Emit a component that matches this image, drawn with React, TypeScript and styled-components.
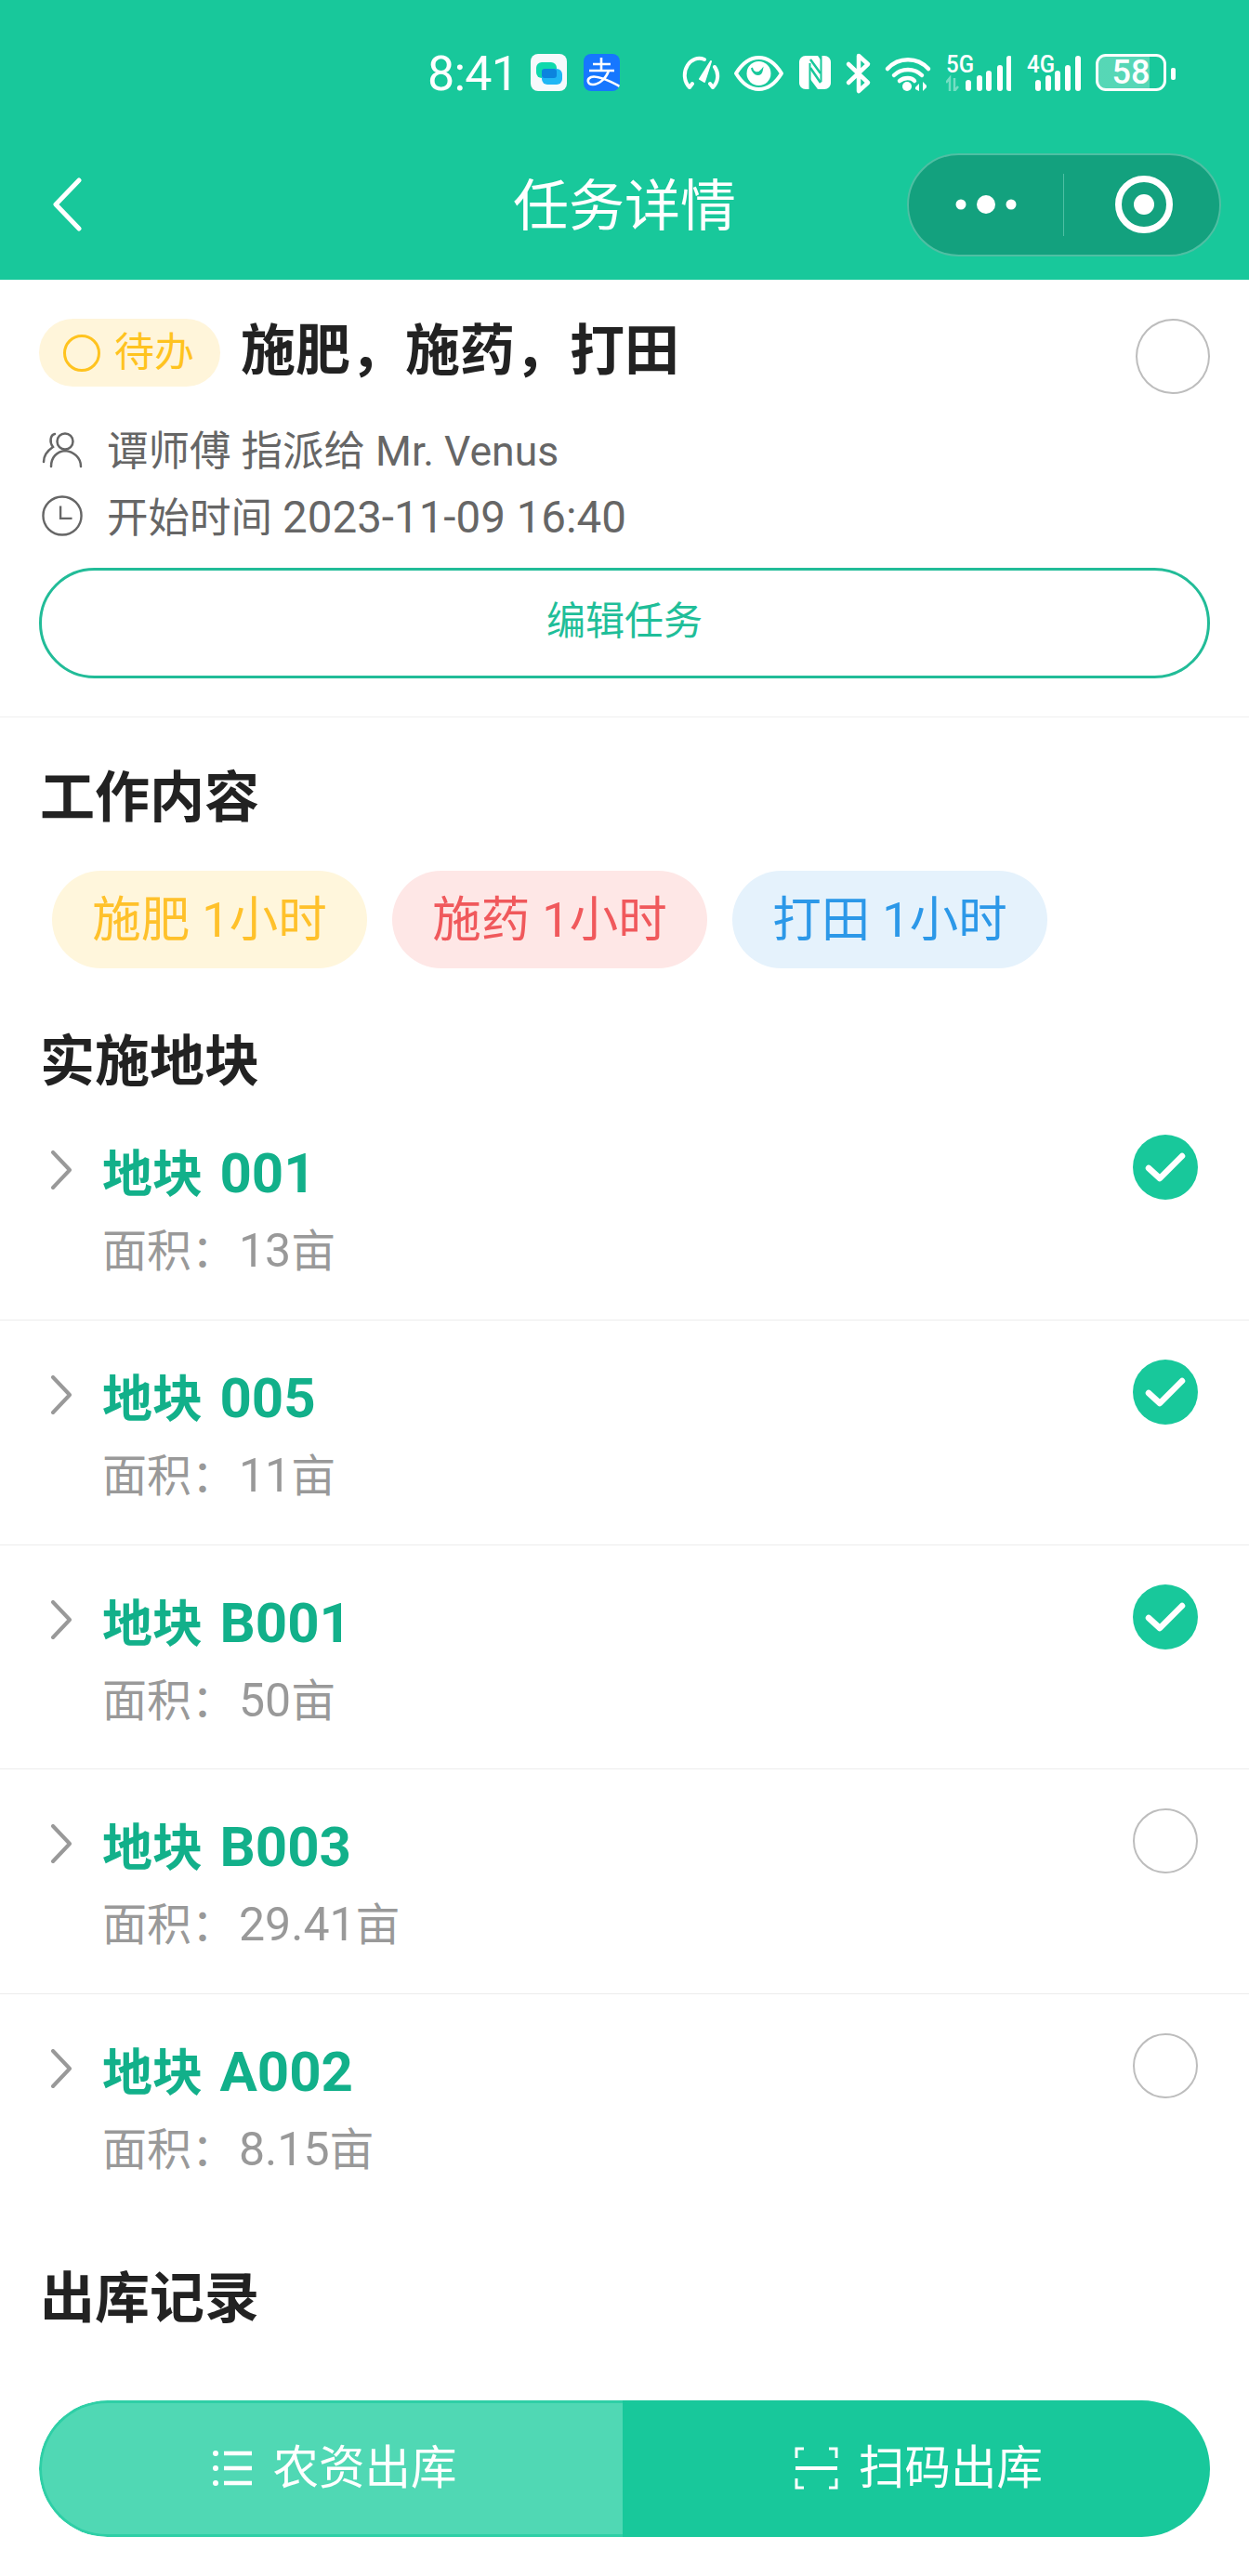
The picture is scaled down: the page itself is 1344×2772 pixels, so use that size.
import React from "react";
import styled, { createGlobalStyle } from "styled-components";

const Global = createGlobalStyle`
  html, body { margin: 0; padding: 0; background: #fff; }
  * { box-sizing: border-box; }
  body { font-family: Roboto, "Noto Sans CJK SC", sans-serif; }
`;

const Page = styled.div`
  width: 1344px;
  height: 2772px;
  overflow: hidden;
  background: #fff;
  display: flex;
  flex-direction: column;
`;

const Header = styled.header`
  height: 301px;
  background: #18c89b;
  color: #fff;
  display: flex;
  flex-direction: column;
`;

const StatusBar = styled.div`
  height: 150px;
  padding: 58px 0 0 460px;
  display: flex;
  align-items: flex-start;
`;

const Time = styled.span`
  width: 96px;
  height: 42px;
  font-size: 52px;
  line-height: 44px;
  letter-spacing: -0.8px;
  margin-right: 15px;
  white-space: nowrap;
`;

const AppTile = styled.div<{ $bg: string }>`
  width: 39px;
  height: 40px;
  border-radius: 8px;
  background: ${(p) => p.$bg};
  margin-right: 18px;
  flex: none;
  overflow: hidden;
`;

const StatusIcon = styled.svg<{ $gap: number }>`
  display: block;
  flex: none;
  margin-left: ${(p) => p.$gap}px;
  overflow: visible;
`;

const SignalIcon = styled.div<{ $w: number; $gap: number }>`
  position: relative;
  width: ${(p) => p.$w}px;
  height: 40px;
  margin-left: ${(p) => p.$gap}px;
  flex: none;
`;

const SignalLabel = styled.span`
  position: absolute;
  left: 0;
  top: 0;
  font-size: 24px;
  font-weight: 500;
  line-height: 22px;
  transform: scaleY(1.1);
  white-space: nowrap;
`;

const Battery = styled.div`
  width: 76px;
  height: 40px;
  margin-left: 16px;
  border: 3px solid #fff;
  border-radius: 11px;
  background: linear-gradient(90deg, rgba(255, 255, 255, 0.27) 78%, transparent 78%);
  font-size: 36px;
  font-weight: 500;
  line-height: 35px;
  text-align: center;
  flex: none;
`;

const BatteryNub = styled.div`
  width: 5px;
  height: 13px;
  margin: 15px 0 0 5px;
  background: #fff;
  border-radius: 2px;
  flex: none;
`;

const Nav = styled.nav`
  height: 140px;
  padding: 0 30px;
  display: grid;
  grid-template-columns: 1fr auto 1fr;
  align-items: center;
`;

const BackIcon = styled.svg`
  display: block;
  margin-left: 26px;
`;

const NavTitle = styled.h1`
  margin: 6px 0 0;
  font-size: 60px;
  font-weight: 400;
  line-height: 80px;
`;

const Capsule = styled.div`
  justify-self: end;
  width: 338px;
  height: 111px;
  border-radius: 56px;
  background: #13a17e;
  border: 2px solid #4fbfa3;
  display: flex;
  align-items: center;
`;

const CapsuleSide = styled.div<{ $w: number }>`
  width: ${(p) => p.$w}px;
  display: flex;
  align-items: center;
  justify-content: center;
  flex: none;
`;

const CapsuleRule = styled.div`
  width: 1px;
  height: 67px;
  background: #4fbfa3;
  flex: none;
`;

const TaskCard = styled.section`
  padding: 42px 42px 42px 42px;
  border-bottom: 1px solid #efefef;
  height: 471px;
`;

const TitleRow = styled.div`
  height: 81px;
  display: flex;
  align-items: flex-start;
`;

const StatusPill = styled.div`
  width: 195px;
  height: 73px;
  border-radius: 37px;
  background: #fff5da;
  color: #ffc31f;
  display: flex;
  align-items: center;
  padding-left: 26px;
  font-size: 43px;
  line-height: 73px;
  gap: 15px;
  flex: none;
`;

const PillDot = styled.span`
  width: 40px;
  height: 40px;
  border-radius: 50%;
  border: 3px solid #ffc31f;
  flex: none;
`;

const TaskTitle = styled.h2`
  margin: -2px 0 0 22px;
  font-size: 59px;
  font-weight: 700;
  line-height: 73px;
  color: #222;
  letter-spacing: 0;
`;

const RoundCheck = styled.div`
  width: 80px;
  height: 81px;
  border-radius: 50%;
  border: 2px solid #bdbdbd;
  margin-left: auto;
  flex: none;
`;

const MetaRows = styled.div`
  margin-top: 27px;
`;

const MetaRow = styled.div`
  height: 71px;
  display: flex;
  align-items: center;
  color: #666;
  font-size: 44.5px;
  line-height: 75px;
  white-space: pre;
`;

const MetaIcon = styled.svg<{ $width: number }>`
  display: block;
  margin: -5px 0 0 3px;
  width: ${(p) => p.$width}px;
  flex: none;
`;

const MetaText = styled.span`
  margin-left: 26px;
`;

const MetaNumber = styled.span`
  font-size: 47.5px;
  line-height: 75px;
`;

const EditButton = styled.button`
  display: block;
  width: 100%;
  height: 119px;
  margin-top: 18px;
  border: 3px solid #22bc98;
  border-radius: 60px;
  background: #fff;
  color: #1fbe99;
  font-family: inherit;
  font-size: 42px;
  line-height: 1;
  padding: 0 0 3px;
`;

const SectionHead = styled.h3<{ $top: number; $nudge?: number }>`
  margin: ${(p) => p.$top}px 0 0 43px;
  height: 76px;
  font-size: 59px;
  font-weight: 700;
  line-height: ${(p) => 76 + (p.$nudge ?? 0)}px;
  color: #222;
`;

const Tags = styled.div`
  margin-top: 40px;
  padding-left: 56px;
  display: flex;
  gap: 27px;
`;

const Tag = styled.div<{ $bg: string; $fg: string }>`
  width: 339px;
  height: 105px;
  border-radius: 53px;
  background: ${(p) => p.$bg};
  color: ${(p) => p.$fg};
  font-size: 52.5px;
  line-height: 107px;
  text-align: center;
`;

const Rows = styled.div``;

const PlotRow = styled.div<{ $last?: boolean }>`
  height: 241.75px;
  padding: 42px 55px 0 55px;
  display: flex;
  align-items: flex-start;
  border-bottom: ${(p) => (p.$last ? "none" : "1px solid #ececec")};
`;

const Chevron = styled.svg`
  display: block;
  margin-top: 17px;
  flex: none;
`;

const PlotInfo = styled.div`
  margin: 6px 0 0 33px;
  flex: 1;
`;

const PlotName = styled.div`
  font-size: 54px;
  font-weight: 700;
  line-height: 72px;
  color: #12b08a;
`;

const PlotCode = styled.span`
  font-size: 60px;
  margin-left: 5px;
`;

const PlotArea = styled.div`
  margin-top: 9px;
  font-size: 48px;
  line-height: 72px;
  color: #999;
`;

const PlotAreaValue = styled.span`
  font-size: 50px;
  margin-left: 3px;
`;

const Tick = styled.div<{ $done: boolean }>`
  width: 70px;
  height: 70px;
  border-radius: 50%;
  flex: none;
  background: ${(p) => (p.$done ? "#18c89b" : "#fff")};
  border: ${(p) => (p.$done ? "none" : "2px solid #bdbdbd")};
  display: flex;
  align-items: center;
  justify-content: center;
`;

const BottomBar = styled.div`
  margin: 71px 42px 0 42px;
  height: 147px;
  border-radius: 74px;
  overflow: hidden;
  display: flex;
`;

const BarButton = styled.div<{ $left?: boolean }>`
  height: 147px;
  display: flex;
  align-items: center;
  justify-content: center;
  gap: 22px;
  color: #fff;
  font-size: 49.5px;
  line-height: 60px;
  padding-left: 5px;
  ${(p) =>
    p.$left
      ? `width: 628px; background: #50d8b4; border: 3px solid #2ecfa6; border-right: none; border-radius: 74px 0 0 74px;`
      : `flex: 1; background: #18c89b;`}
`;

const plots = [
  { code: "001", area: "13", done: true },
  { code: "005", area: "11", done: true },
  { code: "B001", area: "50", done: true },
  { code: "B003", area: "29.41", done: false },
  { code: "A002", area: "8.15", done: false },
];

const W = "#fff";
const barHeights = [12, 17, 22, 28, 38];

const SignalBars = ({ w, bars, dim }: { w: number; bars: number[]; dim?: boolean }) => (
  <svg width={w} height="40" viewBox={`0 0 ${w} 40`} style={{ display: "block" }}>
    {dim && <path d="M4 40V26L0 31M9 26V40L13 35" stroke={W} strokeOpacity=".4" strokeWidth="2.5" fill="none" />}
    {bars.map((b, i) => (
      <rect key={i} x={b} y={40 - barHeights[i]} width="6" height={barHeights[i]} rx="3" fill={W} />
    ))}
  </svg>
);

export default function App() {
  return (
    <Page>
      <Global />
      <Header>
        <StatusBar>
          <Time>8:41</Time>
          <AppTile $bg="#f6f9fc">
            <svg width="39" height="40" viewBox="0 0 39 40">
              <rect x="6" y="9" width="22" height="17" rx="6" fill="#0fd9ac" />
              <rect x="12" y="16" width="22" height="17" rx="6" fill="#1fb6f5" />
              <rect x="12" y="16" width="16" height="10" rx="3" fill="#0b84de" />
            </svg>
          </AppTile>
          <AppTile $bg="#1677ff">
            <svg width="39" height="40" viewBox="0 0 39 40">
              <path d="M10 11H29M6 18H33M19 4V18M27 18C24 27 16 33 10 33C4 33 3 27 8 25C14 23 26 28 39 35" fill="none" stroke={W} strokeWidth="2.6" />
            </svg>
          </AppTile>
          <StatusIcon $gap={49} width="41" height="40" viewBox="0 0 41 40">
            <path d="M8 36C2 30 1 20 6 12C10 6 17 3 24 6M35 14C40 21 39 30 33 36M33 36L30 32M8 36L11 32" fill="none" stroke={W} strokeWidth="4" strokeLinecap="round" />
            <path d="M19 27L31 8L24 30Z" fill={W} stroke={W} strokeWidth="2" strokeLinejoin="round" />
          </StatusIcon>
          <StatusIcon $gap={15} width="53" height="40" viewBox="0 0 53 40">
            <path d="M2 21C10 8 18 4 26.5 4S43 8 51 21C43 34 35 38 26.5 38S10 34 2 21Z" fill="none" stroke={W} strokeWidth="4" strokeLinejoin="round" />
            <circle cx="26.5" cy="21" r="13" fill={W} />
            <path d="M19 15C20 21 26 22 30 17C29 23 22 25 19 15Z" fill="#18c89b" stroke="#18c89b" strokeWidth="2" />
          </StatusIcon>
          <StatusIcon $gap={16} width="36" height="40" viewBox="0 0 36 40">
            <path d="M8 2H12V38H8C4 38 1 35 1 31V9C1 5 4 2 8 2Z" fill={W} />
            <path d="M28 2H24V38H28C32 38 35 35 35 31V9C35 5 32 2 28 2Z" fill={W} />
            <path d="M12 2H21L28 12V38H21L12 26Z" fill={W} />
            <path d="M13 6L24 21M13 15L24 31" stroke="#18c89b" strokeWidth="2.5" />
            <path d="M12.5 10V38M24.5 2V30" stroke="#18c89b" strokeWidth="2" />
          </StatusIcon>
          <StatusIcon $gap={15} width="27" height="42" viewBox="0 0 27 42">
            <path d="M3 11L24 31L14 40V2L24 11L3 31" fill="none" stroke={W} strokeWidth="4.5" strokeLinejoin="round" strokeLinecap="round" />
          </StatusIcon>
          <StatusIcon $gap={15} width="51" height="40" viewBox="0 0 51 40">
            <path d="M3 16C15 3 35 3 47 16M10 23C18 15 32 15 40 23M16 29C21 25 29 25 32 29" fill="none" stroke={W} strokeWidth="4.5" strokeLinecap="round" />
            <circle cx="24" cy="35" r="5" fill={W} />
            <path d="M37 40V32L33 36V38ZM41 30V40L45 36V34Z" fill={W} />
          </StatusIcon>
          <SignalIcon $w={70} $gap={15}>
            <SignalLabel>5G</SignalLabel>
            <SignalBars w={70} bars={[21, 33, 43, 55, 65]} dim />
          </SignalIcon>
          <SignalIcon $w={58} $gap={17}>
            <SignalLabel>4G</SignalLabel>
            <SignalBars w={58} bars={[9, 20, 30, 41, 52]} />
          </SignalIcon>
          <Battery>58</Battery>
          <BatteryNub />
        </StatusBar>
        <Nav>
          <BackIcon width="32" height="58" viewBox="0 0 32 58">
            <path d="M29 3L4 29L29 55" fill="none" stroke={W} strokeWidth="5" strokeLinecap="round" strokeLinejoin="round" />
          </BackIcon>
          <NavTitle>任务详情</NavTitle>
          <Capsule>
            <CapsuleSide $w={166}>
              <svg width="66" height="22" viewBox="0 0 66 22">
                <circle cx="6" cy="11" r="5.5" fill={W} />
                <circle cx="33" cy="11" r="10" fill={W} />
                <circle cx="60" cy="11" r="5.5" fill={W} />
              </svg>
            </CapsuleSide>
            <CapsuleRule />
            <CapsuleSide $w={172}>
              <svg width="62" height="62" viewBox="0 0 62 62">
                <circle cx="31" cy="31" r="27.5" fill="none" stroke={W} strokeWidth="7" />
                <circle cx="31" cy="31" r="11" fill={W} />
              </svg>
            </CapsuleSide>
          </Capsule>
        </Nav>
      </Header>

      <TaskCard>
        <TitleRow>
          <StatusPill>
            <PillDot />
            待办
          </StatusPill>
          <TaskTitle>施肥，施药，打田</TaskTitle>
          <RoundCheck />
        </TitleRow>
        <MetaRows>
          <MetaRow>
            <MetaIcon $width={44} height="40" viewBox="0 0 44 40">
              <circle cx="25" cy="11" r="8.5" fill="none" stroke="#666" strokeWidth="2.5" />
              <path d="M10 38C10 28 16 22 25 21C34 22 42 28 42 38" fill="none" stroke="#666" strokeWidth="2.5" strokeLinecap="round" />
              <path d="M14 3C9 4 8 12 12 17C6 21 2 26 2 33" fill="none" stroke="#666" strokeWidth="2.5" strokeLinecap="round" />
            </MetaIcon>
            <MetaText>谭师傅 指派给 Mr. Venus</MetaText>
          </MetaRow>
          <MetaRow>
            <MetaIcon $width={44} height="46" viewBox="0 0 46 46">
              <circle cx="23" cy="23" r="21.5" fill="none" stroke="#666" strokeWidth="2.5" />
              <path d="M21 12V26H34" fill="none" stroke="#666" strokeWidth="2.5" />
            </MetaIcon>
            <MetaText>开始时间 <MetaNumber>2023-11-09 16:40</MetaNumber></MetaText>
          </MetaRow>
        </MetaRows>
        <EditButton>编辑任务</EditButton>
      </TaskCard>

      <SectionHead $top={49}>工作内容</SectionHead>
      <Tags>
        <Tag $bg="#fff6dc" $fg="#ffc12b">施肥 1小时</Tag>
        <Tag $bg="#fee7e6" $fg="#f0595c">施药 1小时</Tag>
        <Tag $bg="#e5f2fc" $fg="#2c98e8">打田 1小时</Tag>
      </Tags>

      <SectionHead $top={61} $nudge={3}>实施地块</SectionHead>
      <Rows>
        {plots.map((p, i) => (
          <PlotRow key={p.code} $last={i === plots.length - 1}>
            <Chevron width="22" height="42" viewBox="0 0 22 42">
              <path d="M2 2L20 21L2 40" fill="none" stroke="#999" strokeWidth="4" strokeLinecap="round" strokeLinejoin="round" />
            </Chevron>
            <PlotInfo>
              <PlotName>地块 <PlotCode>{p.code}</PlotCode></PlotName>
              <PlotArea>面积：<PlotAreaValue>{p.area}</PlotAreaValue>亩</PlotArea>
            </PlotInfo>
            <Tick $done={p.done}>
              {p.done && (
                <svg width="44" height="32" viewBox="0 0 44 32">
                  <path d="M4 17L16 28L40 4" fill="none" stroke={W} strokeWidth="6.5" strokeLinecap="round" strokeLinejoin="round" />
                </svg>
              )}
            </Tick>
          </PlotRow>
        ))}
      </Rows>

      <SectionHead $top={48}>出库记录</SectionHead>
      <BottomBar>
        <BarButton $left>
          <svg width="43" height="42" viewBox="0 0 43 42">
            <circle cx="3" cy="5" r="3" fill={W} />
            <circle cx="3" cy="21" r="3" fill={W} />
            <circle cx="3" cy="37" r="3" fill={W} />
            <path d="M12 5H42M12 21H42M12 37H42" stroke={W} strokeWidth="4.5" />
          </svg>
          农资出库
        </BarButton>
        <BarButton>
          <svg width="47" height="46" viewBox="0 0 47 46">
            <path d="M10 2H2V12M37 2H45V12M10 44H2V34M37 44H45V34" fill="none" stroke={W} strokeWidth="3" />
            <path d="M1 23H46" stroke={W} strokeWidth="4" />
          </svg>
          扫码出库
        </BarButton>
      </BottomBar>
    </Page>
  );
}
